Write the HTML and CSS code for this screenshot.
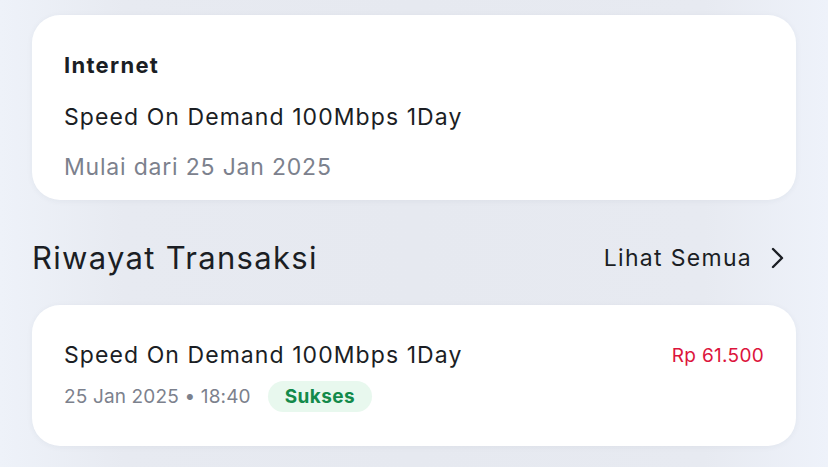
FILE: index.html
```html
<!DOCTYPE html>
<html lang="id">
<head>
<meta charset="utf-8">
<link rel="stylesheet" href="styles.css">
</head>
<body>
<div class="page">
  <div class="card product">
    <div class="cat">Internet</div>
    <div class="name">Speed On Demand 100Mbps 1Day</div>
    <div class="since">Mulai dari 25 Jan 2025</div>
  </div>
  <div class="section-head">
    <div class="section-title">Riwayat Transaksi</div>
    <div class="see-all">Lihat Semua
      <svg class="chev" width="14" height="24" viewBox="0 0 14 24"><path d="M3 3 L12 12 L3 21" fill="none" stroke="#1b1e24" stroke-width="2.4" stroke-linecap="round" stroke-linejoin="round"/></svg>
    </div>
  </div>
  <div class="card tx">
    <div class="tx-top">
      <div class="name">Speed On Demand 100Mbps 1Day</div>
      <div class="price">Rp 61.500</div>
    </div>
    <div class="tx-bottom">
      <span class="date">25 Jan 2025 • 18:40</span>
      <span class="pill">Sukses</span>
    </div>
  </div>
</div>
</body>
</html>
```
FILE: styles.css
```css
html, body { margin: 0; padding: 0; }
body {
  width: 828px; height: 467px; overflow: hidden;
  background: linear-gradient(90deg, #eef2f9 0%, #e7eaf1 15%, #e6e9f0 50%, #e7eaf1 85%, #eef2fa 100%);
  font-family: "Inter", "Noto Sans", sans-serif;
  color: #1b1e24;
}
.page { padding: 15px 32px 0; }
.card {
  background: #fff;
  border-radius: 28px;
  box-shadow: 0 1px 6px rgba(40,50,80,0.05);
}
.product { height: 185px; box-sizing: border-box; padding: 34px 32px 0; }
.cat { font-size: 22px; font-weight: 700; line-height: 32px; letter-spacing: 1.3px; }
.product .name { margin-top: 20px; }
.name { font-size: 23px; line-height: 32px; font-weight: 400; letter-spacing: 1.07px; }
.since { margin-top: 18px; font-size: 23px; line-height: 32px; color: #7c818d; letter-spacing: 0.8px; }
.section-head {
  display: flex; justify-content: space-between; align-items: center;
  height: 40px; margin-top: 38px; margin-bottom: 27px;
}
.section-title { font-size: 31px; line-height: 40px; letter-spacing: 1.3px; }
.see-all { display: flex; align-items: center; gap: 18px; font-size: 23px; letter-spacing: 1.3px; padding-right: 12px; }
.tx { height: 141px; box-sizing: border-box; padding: 34px 32px 0; }
.tx-top { display: flex; justify-content: space-between; align-items: center; }
.price { font-size: 19px; color: #dc143c; letter-spacing: 0.3px; }
.tx-bottom { display: flex; align-items: center; gap: 17px; margin-top: 10px; }
.date { font-size: 19px; color: #7c818d; letter-spacing: 0.15px; }
.pill {
  background: #e8f8ee; color: #138a4a; font-weight: 700; font-size: 19px; letter-spacing: 0.4px;
  height: 31px; line-height: 31px; padding: 0 17px; border-radius: 16px;
}
```
